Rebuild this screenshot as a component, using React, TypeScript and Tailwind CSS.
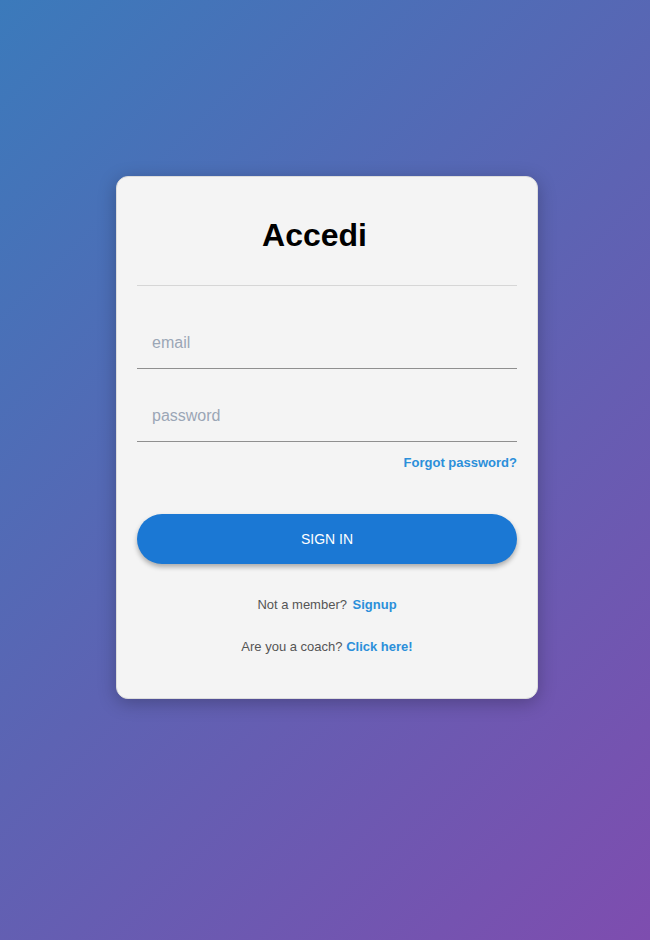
export default function App() {
  return (
    <div className="min-h-[940px] w-full bg-[linear-gradient(135deg,#3b7abb_0%,#5d63b3_50%,#7e4daf_100%)] pt-[176px] font-['Liberation_Sans',Arial,sans-serif]">
      <div className="mx-auto w-[422px] translate-x-[2px] rounded-xl border border-[#dcdcdc] bg-[#f4f4f4] px-[20px] pb-[42px] shadow-[0_4px_18px_rgba(0,0,0,0.25)]">
        {/* Header */}
        <h1 className="pt-[40px] pr-[25px] text-center text-[32px] font-bold leading-[37px] text-black">Accedi</h1>
        <div className="mt-[31px] h-px bg-[#d6d6d6]" />

        {/* Inputs */}
        <div className="mt-[30px]">
          <input
            type="email"
            placeholder="email"
            className="h-[53px] w-full border-b border-[#8f8f8f] bg-transparent px-[15px] pt-[2px] text-[16px] text-[#333] outline-none placeholder:text-[#9ba6b6]"
          />
          <input
            type="password"
            placeholder="password"
            className="mt-[20px] h-[53px] w-full border-b border-[#8f8f8f] bg-transparent px-[15px] pt-[2px] text-[16px] text-[#333] outline-none placeholder:text-[#9ba6b6]"
          />
        </div>
        <div className="mt-[8px] text-right">
          <a href="#" className="text-[13px] font-bold text-[#2b8fda]">
            Forgot password?
          </a>
        </div>

        {/* Button */}
        <button className="mt-[40px] h-[50px] w-full rounded-full bg-[#1b78d4] text-[14px] text-white shadow-[0_3px_5px_rgba(0,0,0,0.3)]">
          SIGN IN
        </button>

        {/* Links */}
        <p className="mt-[31px] text-center text-[13px] text-[#555]">
          Not a member? <a href="#" className="ml-[2px] font-bold text-[#2b8fda]">Signup</a>
        </p>
        <p className="mt-[22px] text-center text-[13px] text-[#555]">
          Are you a coach? <a href="#" className="font-bold text-[#2b8fda]">Click here!</a>
        </p>
      </div>
    </div>
  );
}
